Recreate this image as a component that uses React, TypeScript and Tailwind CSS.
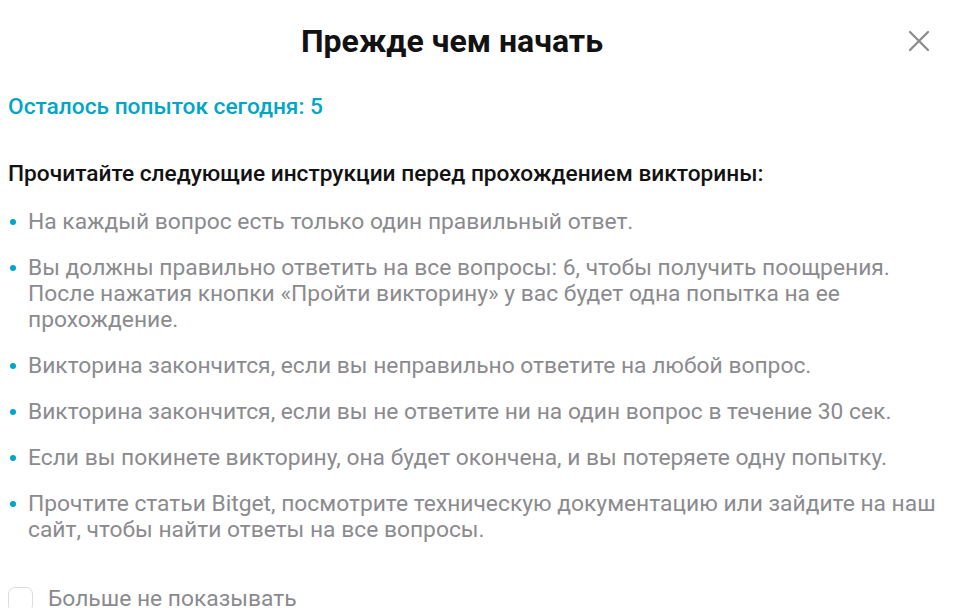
import React from "react";

const items: string[][] = [
  ["На каждый вопрос есть только один правильный ответ."],
  [
    "Вы должны правильно ответить на все вопросы: 6, чтобы получить поощрения.",
    "После нажатия кнопки «Пройти викторину» у вас будет одна попытка на ее",
    "прохождение.",
  ],
  ["Викторина закончится, если вы неправильно ответите на любой вопрос."],
  ["Викторина закончится, если вы не ответите ни на один вопрос в течение 30 сек."],
  ["Если вы покинете викторину, она будет окончена, и вы потеряете одну попытку."],
  [
    "Прочтите статьи Bitget, посмотрите техническую документацию или зайдите на наш",
    "сайт, чтобы найти ответы на все вопросы.",
  ],
];

export default function App() {
  return (
    <div
      className="w-[978px] h-[608px] overflow-hidden bg-white"
      style={{ fontFamily: "Roboto, 'Noto Sans', sans-serif" }}
    >
      <div className="flex items-center pt-[22px]">
        <h1 className="w-[904px] text-center text-[32px] leading-[38px] font-bold text-[#121212]">
          Прежде чем начать
        </h1>
        <button className="ml-[4px] w-[22px] h-[22px] flex items-center justify-center text-[#8a8a8a]">
          <svg width="22" height="22" viewBox="0 0 22 22" fill="none">
            <path d="M2 2L20 20M20 2L2 20" stroke="currentColor" strokeWidth="2.2" strokeLinecap="round" />
          </svg>
        </button>
      </div>
      <div className="pl-[8px]">
        <p className="mt-[33px] text-[22.7px] leading-[28px] font-medium text-[#00a6c8]">
          Осталось попыток сегодня: 5
        </p>
        <p className="mt-[39px] text-[22.7px] leading-[28px] font-medium text-[#121212]">
          Прочитайте следующие инструкции перед прохождением викторины:
        </p>
        <ul className="mt-[21px] flex flex-col gap-[20px]">
          {items.map((lines, i) => (
            <li key={i} className="flex items-start text-[22.8px] leading-[26px] text-[#8b8b8f]">
              <span className="w-[20px] h-[26px] flex items-center shrink-0">
                <span className="ml-[2px] w-[6px] h-[6px] rounded-full bg-[#00a6c8]" />
              </span>
              <span className="flex flex-col">
                {lines.map((l, j) => (
                  <span key={j} className="whitespace-nowrap">{l}</span>
                ))}
              </span>
            </li>
          ))}
        </ul>
        <label className="mt-[43px] flex items-center gap-[15px]">
          <span className="w-[25px] h-[25px] rounded-[7px] border border-[#dcdcdc] bg-white shrink-0" />
          <span className="text-[22.8px] leading-[26px] text-[#8b8b8f]">Больше не показывать</span>
        </label>
      </div>
    </div>
  );
}
